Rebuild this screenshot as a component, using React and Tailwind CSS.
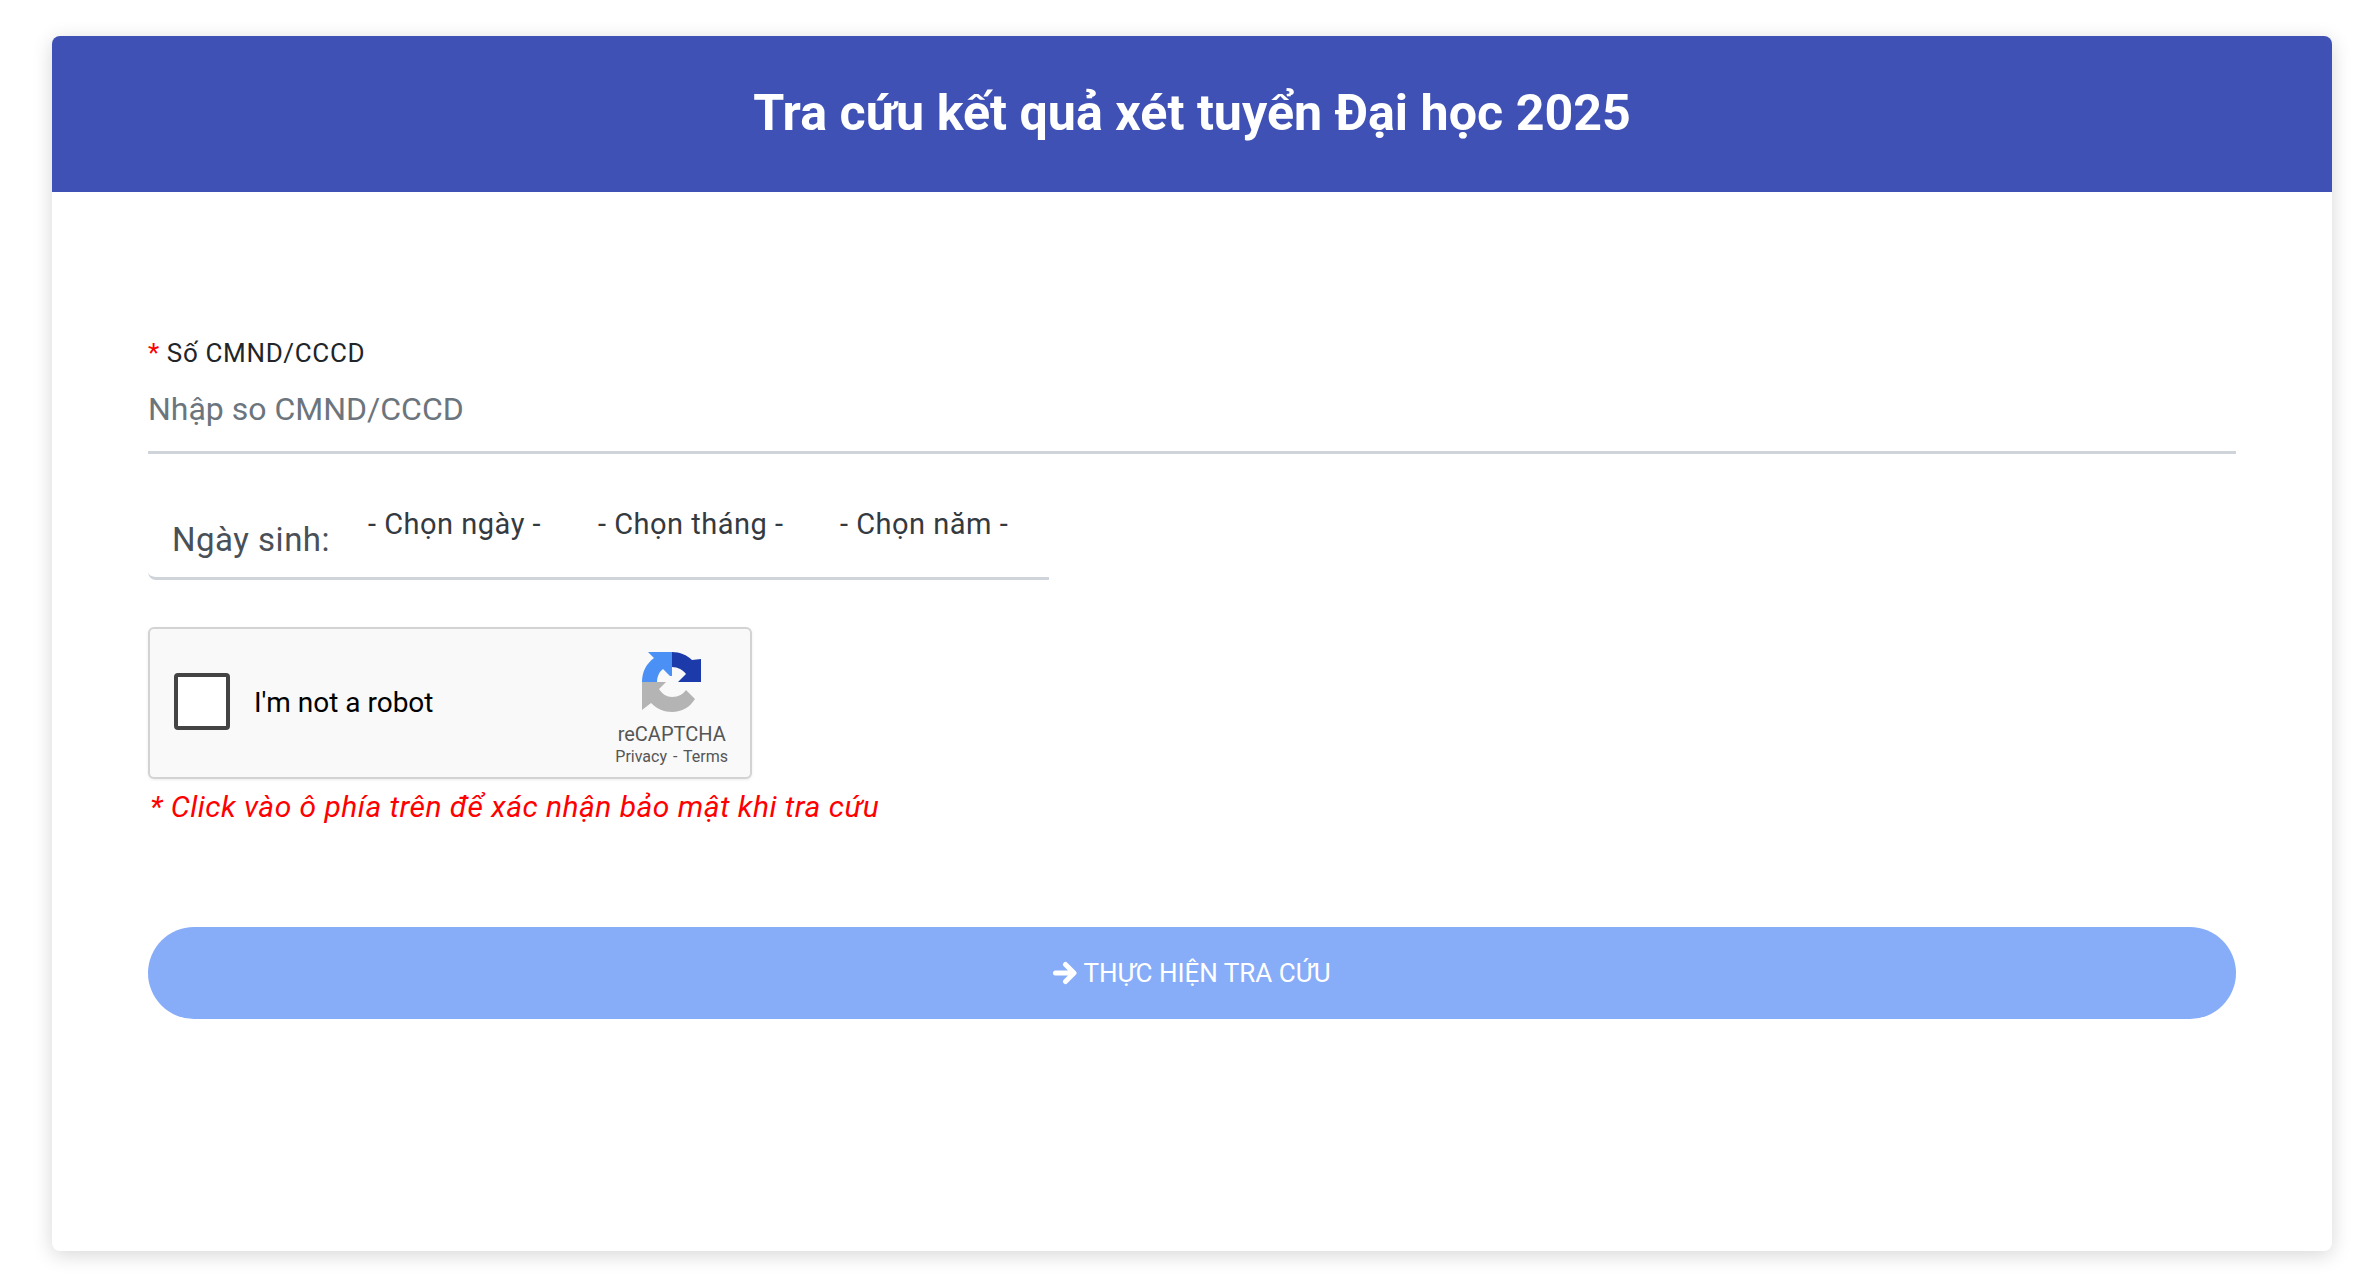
import React from 'react';

const RecaptchaLogo = () => (
  <svg viewBox="0 0 60 60" className="w-[60px] h-[60px]">
    <path d="M30 0H6L12 6C4 12 0 20 0 30H15C15 25 17 20 21 17L28 24H30Z" fill="#4a90f5" />
    <path d="M30 0C38 0 45 3 50 8L59 7V30H36L44 22C41 18 36 15 30 15Z" fill="#1c3aa9" />
    <path d="M0 30H24L17 37C20 42 25 45 30 45C37 45 41 42 44 38L53 47C48 55 40 60 30 60C22 60 15 57 9 51L0 58Z" fill="#b4b4b4" />
  </svg>
);

const ArrowIcon = () => (
  <svg viewBox="0 0 24 24" className="w-[24px] h-[24px]" fill="none" stroke="white" strokeWidth="5" strokeLinecap="round" strokeLinejoin="round">
    <path d="M2.5 12H20M12.5 3.5L21 12L12.5 20.5" />
  </svg>
);

const selects = [
  { label: '- Chọn ngày -', width: 'w-[230px]' },
  { label: '- Chọn tháng -', width: 'w-[242px]' },
  { label: '- Chọn năm -', width: 'w-[200px]' },
];

export default function App() {
  return (
    <div className="min-h-[1282px] bg-white pt-[36px] pl-[52px] pr-[48px] font-['Roboto',sans-serif]">
      <div className="h-[1215px] rounded-[8px] bg-white shadow-[0_4px_20px_rgba(0,0,0,0.16)] overflow-hidden">
        <div className="h-[156px] bg-[#3f51b5] flex items-center justify-center">
          <h1 className="text-[50.2px] leading-[60px] font-bold text-white -mt-[2px]">Tra cứu kết quả xét tuyển Đại học 2025</h1>
        </div>

        <div className="px-[96px] pt-[145px]">
          <label className="block text-[26px] leading-[32px] text-[#212529] tracking-[0.65px]">
            <span className="text-[#ff0000] mr-[7px]">*</span>Số CMND/CCCD
          </label>
          <input
            type="text"
            placeholder="Nhập so CMND/CCCD"
            className="block w-full h-[85px] pb-[3px] border-b-[3px] border-[#ced4da] text-[32px] outline-none placeholder:text-[#6c757d]"
          />

          <div className="mt-[36px] w-[901px] h-[90px] flex border-b-[3px] border-[#ced4da] rounded-bl-[8px] pl-[24px]">
            <span className="w-[196px] shrink-0 pt-[26px] text-[33px] leading-[48px] tracking-[0.5px] text-[#495057]">Ngày sinh:</span>
            {selects.map((item) => (
              <select key={item.label} className={`${item.width} shrink-0 appearance-none h-[40px] mt-[14px] text-[29px] leading-[40px] tracking-[0.5px] text-[#343a40] outline-none`}>
                <option>{item.label}</option>
              </select>
            ))}
          </div>

          <div className="mt-[47px] w-[604px] h-[152px] bg-[#f9f9f9] border-[2px] border-[#d3d3d3] rounded-[6px] shadow-[0_1px_3px_rgba(0,0,0,0.08)] flex items-center pl-[24px] pr-[22px]">
            <div className="w-[56px] h-[57px] -mt-[3px] bg-white border-[4px] border-[#444444] rounded-[4px] shrink-0" />
            <span className="ml-[24px] text-[28px] text-black">I'm not a robot</span>
            <div className="ml-auto mt-[11px] flex flex-col items-center">
              <RecaptchaLogo />
              <span className="mt-[8px] text-[20px] leading-[28px] text-[#555555]">reCAPTCHA</span>
              <span className="text-[16px] leading-[18px] [word-spacing:2px] text-[#555555]">Privacy - Terms</span>
            </div>
          </div>

          <p className="mt-[8px] pl-[2px] text-[30px] leading-[40px] italic text-[#ff0000] tracking-[0.46px]">
            * Click vào ô phía trên để xác nhận bảo mật khi tra cứu
          </p>

          <button className="mt-[100px] w-full h-[92px] rounded-[46px] bg-[#87adf9] flex items-center justify-center gap-[6px] text-[26px] text-white">
            <ArrowIcon />
            THỰC HIỆN TRA CỨU
          </button>
        </div>
      </div>
    </div>
  );
}
